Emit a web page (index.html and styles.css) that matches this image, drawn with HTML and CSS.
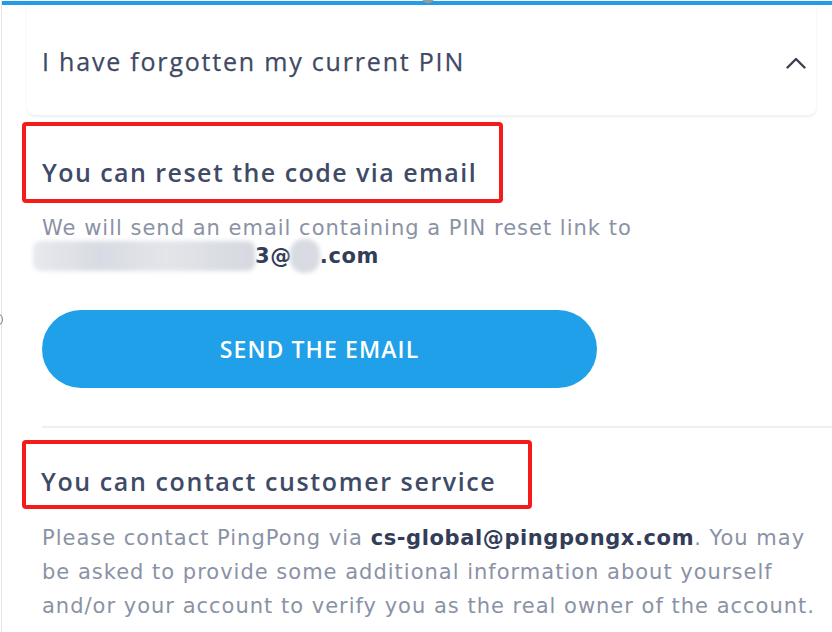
FILE: index.html
```html
<!DOCTYPE html>
<html lang="en">
<head>
<meta charset="utf-8">
<title>Forgotten PIN</title>
<link rel="stylesheet" href="styles.css">
</head>
<body>
<div class="frame">
  <span class="top-knob"></span>
  <span class="side-glyph"></span>
  <div class="topline"></div>
  <header class="acc-head">
    <h1 class="acc-title">I have forgotten my current PIN</h1>
    <svg class="chevron" width="20" height="12" viewBox="0 0 20 12" aria-hidden="true">
      <path d="M1.5 10.5 L10 2 L18.5 10.5" fill="none" stroke="#3b4150" stroke-width="2.4" stroke-linecap="round" stroke-linejoin="round"/>
    </svg>
  </header>
  <main class="content">
    <section class="option">
      <h2 class="opt-title opt-title--email">You can reset the code via email</h2>
      <p class="opt-text">We will send an email containing a PIN reset link to<br>
        <span class="masked"><span class="blur blur--long"></span><strong class="addr">3@</strong><span class="blur blur--short"></span><strong class="addr">.com</strong></span>
      </p>
      <button class="send-btn" type="button">SEND THE EMAIL</button>
    </section>
    <hr class="divider">
    <section class="option">
      <h2 class="opt-title opt-title--service">You can contact customer service</h2>
      <p class="opt-text opt-text--long">Please contact PingPong via <strong class="addr">cs-global@pingpongx.com</strong>. You may<br>be asked to provide some additional information about yourself<br>and/or your account to verify you as the real owner of the account.</p>
    </section>
  </main>
</div>
</body>
</html>
```
FILE: styles.css
```css
html, body {
  margin: 0;
  padding: 0;
  background: #ffffff;
}
body {
  font-family: "Open Sans", "DejaVu Sans", sans-serif;
  width: 832px;
  height: 632px;
  overflow: hidden;
}
.frame {
  position: relative;
  margin-left: 1px;
  border-left: 1px solid #e4e4e4;
  height: 632px;
  padding-top: 1px;
  box-sizing: border-box;
}
.top-knob {
  position: absolute;
  left: 420px;
  top: -6px;
  width: 12px;
  height: 9px;
  border-radius: 50%;
  background: #9a9a9a;
}
.side-glyph {
  position: absolute;
  left: -8px;
  top: 314px;
  width: 7px;
  height: 9px;
  border: 1.5px solid #8c8c8c;
  border-radius: 50%;
}
.topline {
  height: 4px;
  background: #229be8;
}
.acc-head {
  margin: 0 16px 0 25px;
  height: 110px;
  padding: 0 10px 0 15px;
  display: flex;
  align-items: center;
  justify-content: space-between;
  border-radius: 0 0 8px 8px;
  box-shadow: 0 2px 3px rgba(0, 0, 0, 0.07);
  background: #fff;
}
.acc-title {
  margin: 0;
  font-size: 25px;
  font-weight: 500;
  color: #3f4964;
  letter-spacing: 1.8px;
  line-height: 34px;
  padding-top: 2px;
  -webkit-text-stroke: 0.25px #3f4964;
}
.chevron {
  display: block;
  margin-top: 6px;
}
.content {
  padding-left: 40px;
}
.option {
  display: flex;
  flex-direction: column;
  align-items: flex-start;
}
.opt-title {
  margin: 0 0 0 -20px;
  border: 4px solid #f51b1b;
  border-radius: 4px;
  font-size: 25px;
  font-weight: 600;
  color: #3f4a67;
  line-height: 34px;
  letter-spacing: 1.45px;
}
.opt-title--email {
  margin-top: 7px;
  padding: 29px 22px 10px 16px;
}
.opt-title--service {
  margin-top: 12px;
  padding: 20px 32px 7px 15px;
  letter-spacing: 1.6px;
}
.opt-text {
  margin: 11px 0 0;
  font-family: "DejaVu Sans", "Open Sans", sans-serif;
  font-size: 21px;
  line-height: 28px;
  letter-spacing: 1px;
  color: #8a92a5;
}
.opt-text--long {
  margin-top: 12px;
  line-height: 34px;
  width: 790px;
}
.addr {
  font-weight: 700;
  color: #333d58;
  letter-spacing: 0.6px;
}
.masked {
  display: inline-flex;
  align-items: center;
  height: 28px;
  vertical-align: top;
}
.blur {
  display: inline-block;
  flex: none;
  height: 30px;
  border-radius: 8px;
  background: linear-gradient(90deg, #e8e9ee, #d8dbe3 30%, #e3e5ea 60%, #d5d8e0);
  filter: blur(2px);
}
.blur--long {
  width: 222px;
  margin-left: -9px;
}
.blur--short {
  width: 30px;
  height: 34px;
  border-radius: 14px;
  margin: 0 0 0 -2px;
  background: #d9dbe2;
}
.send-btn {
  margin-top: 40px;
  width: 555px;
  height: 78px;
  border: 0;
  border-radius: 39px;
  background: #1fa0e8;
  color: #ffffff;
  font-family: "Open Sans", "DejaVu Sans", sans-serif;
  font-size: 23px;
  font-weight: 600;
  letter-spacing: 1.1px;
  padding: 0;
}
.divider {
  margin: 38px 0 0;
  border: 0;
  height: 2px;
  background: #f0f0f0;
}
```
